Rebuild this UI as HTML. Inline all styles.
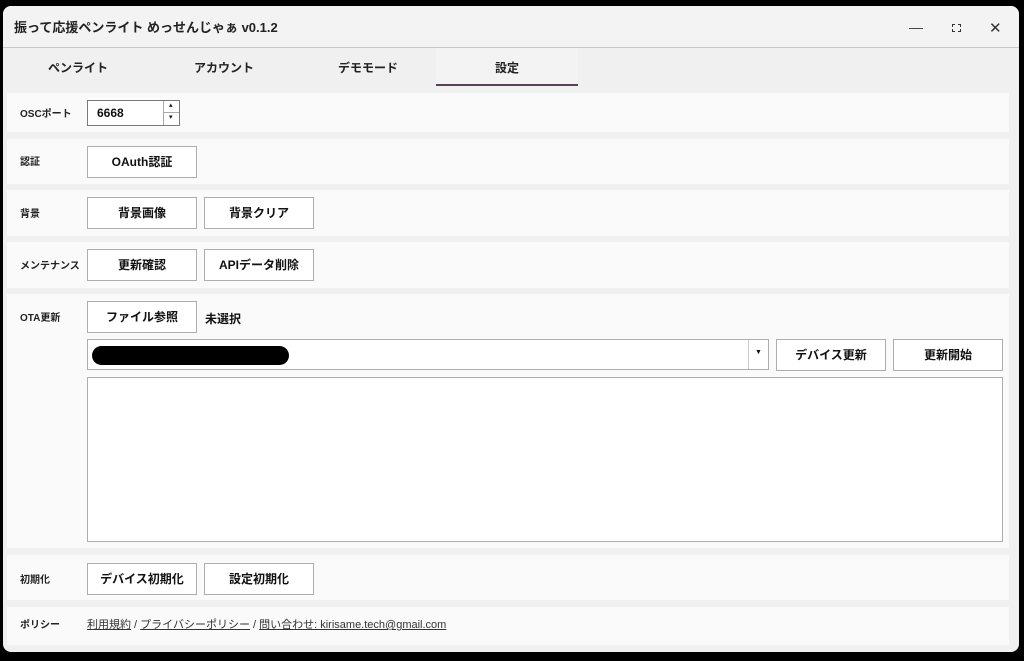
<!DOCTYPE html>
<html><head><meta charset="utf-8"><style>
*{box-sizing:border-box;margin:0;padding:0}
body{width:1024px;height:661px;background:#000;position:relative;overflow:hidden;font-family:"Liberation Sans","Noto Sans CJK JP",sans-serif;color:#111}
.win{position:absolute;left:3px;top:6px;width:1016px;height:646px;background:#f0f0f0;border-radius:8px;overflow:hidden}
.title{position:absolute;left:0;top:0;width:100%;height:42px;background:#f3f3f3;border-bottom:1px solid #c8c8c8}
.title span{position:absolute;left:11px;top:11px;font-size:13px;font-weight:bold;color:#222}
.a{position:absolute}
.tab{position:absolute;top:59px;font-size:12px;font-weight:bold;color:#222}
.row{position:absolute;left:7px;width:1002px;background:#fafafa}
.lbl{position:absolute;left:20px;font-size:10px;font-weight:bold;color:#222}
.btn{position:absolute;height:32px;border:1px solid #adadad;background:#fff;font-size:12px;font-weight:bold;text-align:center;line-height:30px;color:#111}
</style></head><body>
<div class="win">
<div class="title"><span>振って応援ペンライト めっせんじゃぁ v0.1.2</span>
<div class="a" style="left:906px;top:22px;width:14px;height:1.2px;background:#444"></div>
<div class="a" style="left:949px;top:18px;width:9px;height:8px;border:1.5px dashed #333"></div>
<div class="a" style="left:986px;top:13px;font-size:15px;color:#333">✕</div>
</div>
</div>
<div class="tab" style="left:48px">ペンライト</div>
<div class="tab" style="left:194px">アカウント</div>
<div class="tab" style="left:338px">デモモード</div>
<div class="a" style="left:436px;top:48px;width:142px;height:38px;background:#f3f3f3"></div>
<div class="tab" style="left:495px">設定</div>
<div class="a" style="left:436px;top:84px;width:142px;height:2px;background:#5a3f55"></div>

<div class="row" style="top:93px;height:39px"></div>
<div class="lbl" style="top:105px">OSCポート</div>
<div class="a" style="left:87px;top:100px;width:93px;height:26px;border:1px solid #7a7a7a;background:#fff"></div>
<div class="a" style="left:97px;top:106px;font-size:12px;font-weight:bold">6668</div>
<div class="a" style="left:163px;top:101px;width:1px;height:24px;background:#aaa"></div>
<div class="a" style="left:164px;top:112px;width:15px;height:1px;background:#aaa"></div>
<div class="a" style="left:169px;top:101px;font-size:7px">▴</div>
<div class="a" style="left:169px;top:113px;font-size:7px">▾</div>

<div class="row" style="top:139px;height:45px"></div>
<div class="lbl" style="top:153px">認証</div>
<div class="btn" style="left:87px;top:146px;width:110px">OAuth認証</div>

<div class="row" style="top:190px;height:46px"></div>
<div class="lbl" style="top:205px">背景</div>
<div class="btn" style="left:87px;top:197px;width:110px">背景画像</div>
<div class="btn" style="left:204px;top:197px;width:110px">背景クリア</div>

<div class="row" style="top:242px;height:46px"></div>
<div class="lbl" style="top:257px">メンテナンス</div>
<div class="btn" style="left:87px;top:249px;width:110px">更新確認</div>
<div class="btn" style="left:204px;top:249px;width:110px">APIデータ削除</div>

<div class="row" style="top:294px;height:254px"></div>
<div class="lbl" style="top:309px">OTA更新</div>
<div class="btn" style="left:87px;top:301px;width:110px">ファイル参照</div>
<div class="a" style="left:205px;top:310px;font-size:12px;font-weight:bold">未選択</div>
<div class="a" style="left:87px;top:339px;width:682px;height:31px;border:1px solid #adadad;background:#fff"></div>
<div class="a" style="left:92px;top:346px;width:197px;height:19px;border-radius:10px;background:#000"></div>
<div class="a" style="left:748px;top:340px;width:1px;height:29px;background:#ccc"></div>
<div class="a" style="left:755px;top:349px;font-size:7px">▼</div>
<div class="btn" style="left:776px;top:339px;width:110px">デバイス更新</div>
<div class="btn" style="left:893px;top:339px;width:110px">更新開始</div>
<div class="a" style="left:87px;top:377px;width:916px;height:165px;border:1px solid #adadad;background:#fff"></div>

<div class="row" style="top:555px;height:45px"></div>
<div class="lbl" style="top:571px">初期化</div>
<div class="btn" style="left:87px;top:563px;width:110px">デバイス初期化</div>
<div class="btn" style="left:204px;top:563px;width:110px">設定初期化</div>

<div class="row" style="top:607px;height:38px"></div>
<div class="lbl" style="top:616px">ポリシー</div>
<div class="a" style="left:87px;top:616px;font-size:11px;color:#333"><u>利用規約</u> / <u>プライバシーポリシー</u> / <u>問い合わせ: kirisame.tech@gmail.com</u></div>
</body></html>
